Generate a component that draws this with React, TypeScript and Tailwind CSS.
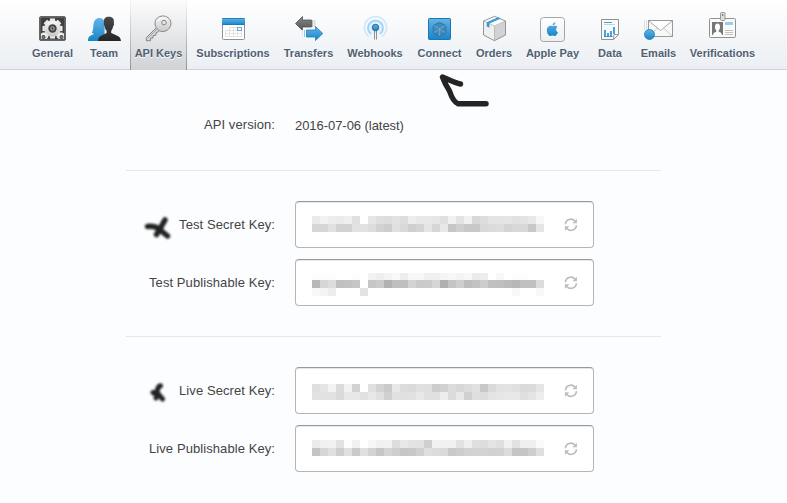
import type { ReactNode } from "react";

type NavItem = { label: string; width: string; box: string; art: ReactNode; active?: boolean };

const gearTeeth = [0, 45, 90, 135, 180, 225, 270, 315];

function Gear({ x, y, r }: { x: number; y: number; r: number }) {
  return (
    <g transform={`translate(${x} ${y})`} fill="url(#silver)">
      {gearTeeth.map((a) => (
        <path key={a} transform={`rotate(${a})`} d={`M${-r * 0.3} ${-r * 0.6}L${-r * 0.24} ${-r}H${r * 0.24}L${r * 0.3} ${-r * 0.6}z`} />
      ))}
      <circle r={r * 0.8} />
      <circle r={r * 0.42} fill="#444" />
      <circle r={r * 0.22} fill="#999" />
      <circle r={r * 0.09} fill="#333" />
    </g>
  );
}

const items: NavItem[] = [
  {
    label: "General",
    width: "w-[51px]",
    box: "27 10 51 32",
    art: (
      <g>
        <rect x="39.5" y="16.5" width="26" height="24" rx="1.5" fill="#3f3f3f" stroke="#666" />
        <rect x="40.5" y="17.5" width="24" height="22" fill="none" stroke="#8a8a8a" strokeWidth=".4" />
        <svg x="41" y="18" width="23" height="21" viewBox="41 18 23 21">
          <Gear x={52.5} y={28.5} r={10} />
          <Gear x={43.5} y={37} r={4.6} />
          <Gear x={61.5} y={37} r={4.6} />
        </svg>
      </g>
    ),
  },
  {
    label: "Team",
    width: "w-[44px]",
    box: "82 10 44 32",
    art: (
      <g>
        <path d="M88 41c0-4 1.600-5.200 4-6l2.200-1.600c-1.200 0-2-.2-2.400-.6 1.800-2.800 1.200-6 1.800-9.400.6-3.600 3-5.600 6-5.400 3.500.2 5 2.500 5 6v17z" fill="url(#blue)" />
        <path d="M98 41c.2-3.400 1.800-5 4.600-6l4-2v-2.200c-1.400-1.400-1.700-3-2-4.800-.8-.2-1.200-2.300-.6-3-.6-4.300 1.300-6.200 5-6.200s5.400 2.200 4.800 6.200c.6.7.2 2.800-.6 3-.3 1.800-.8 3.400-2 4.800V33l4.500 2c3 1 5 2.600 5.300 6z" fill="url(#dark)" />
      </g>
    ),
  },
  {
    label: "API Keys",
    width: "w-[57px]",
    box: "131 10 55 32",
    active: true,
    art: (
      <g>
        <path d="M155.800 28.200 146.300 37.700v3h4.200v-2.400l2.400-.2.300-2.500 2.500-.3.500-2.500 3-1.500" fill="#d5d5d5" stroke="#858585" strokeLinejoin="round" />
        <path d="M155.500 20.500c1.800-3.700 6-5.200 9.800-4.200 4 1.200 6.400 5 5.400 9-1.200 4-5 6.800-9 6.200-4.800-.8-8-6.500-6.200-11z" fill="url(#silver)" stroke="#858585" />
        <path d="m157 29-9 9.200" stroke="#999" strokeWidth=".8" />
        <circle cx="164" cy="22.600" r="2.300" fill="#e5e5e5" stroke="#858585" />
        <path d="M157.500 21.500c1.500-3 4.500-4 7.500-3.400" fill="none" stroke="#fff" />
      </g>
    ),
  },
  {
    label: "Subscriptions",
    width: "w-[84px]",
    box: "191 10 84 32",
    art: (
      <g>
        <rect x="222.500" y="18.500" width="22" height="21" rx="1" fill="#fff" stroke="#919191" />
        <rect x="222" y="18" width="23" height="7" rx="1" fill="url(#blue)" />
        <path d="M222.500 24.500h22M222.500 18.500h22" stroke="#1c75b2" strokeWidth=".8" />
        <path d="M229.500 27.500h12v3h-16v3h16v3h-16v-6m4-3v9m4-9v9m4-9v9m4-9v9" fill="none" stroke="#e2e2e2" />
        <rect x="237.500" y="27.500" width="4" height="3" fill="#eef8ff" stroke="#6eafda" />
      </g>
    ),
  },
  {
    label: "Transfers",
    width: "w-[59px]",
    box: "279 10 59 32",
    art: (
      <g>
        <path d="M295.500 23.500 302.500 16.500v3.500h9v7h-9v3.500z" fill="url(#gray)" stroke="#555" strokeWidth=".8" />
        <path d="M312.500 20v7" stroke="#bbb" />
        <path d="M314.500 20v7" stroke="#ddd" strokeWidth="2" />
        <path d="M322.800 33.500 315.500 26.500v3.500h-9v7h9v3.500z" fill="url(#blue)" stroke="#287fb9" strokeWidth=".8" />
        <path d="M304.500 30v7" stroke="#8fcaee" />
        <path d="M302.500 30v7" stroke="#d4ebf8" />
      </g>
    ),
  },
  {
    label: "Webhooks",
    width: "w-[66px]",
    box: "342 10 66 32",
    art: (
      <g fill="none">
        <path d="M369 36.500a11 11 0 1 1 13 0" stroke="#cfe8fb" strokeWidth="1.800" />
        <path d="M371 34a7.500 7.500 0 1 1 9 0" fill="#e2f2fe" stroke="#a3d5fb" strokeWidth="2" />
        <path d="M374.500 31v8.500M376.500 31v8.500" stroke="#777" strokeWidth=".8" />
        <circle cx="375.500" cy="27.500" r="3.200" fill="url(#blue)" stroke="#27638d" />
      </g>
    ),
  },
  {
    label: "Connect",
    width: "w-[55px]",
    box: "412 10 55 32",
    art: (
      <g>
        <rect x="428.500" y="18.500" width="22" height="21" rx=".8" fill="url(#blue)" stroke="#1877b4" />
        <path d="m439.500 22.500 6.300 3v7.500l-6.300 3.500-6.300-3.500v-7.500z" fill="#4089b9" stroke="#2f74a2" />
        <path d="m433.500 25.500 6 3 6-3m-6 3v7.500M434 32.500l5.500-3.500 5.500 3.500" fill="none" stroke="#76b2d8" strokeWidth=".7" />
      </g>
    ),
  },
  {
    label: "Orders",
    width: "w-[46px]",
    box: "471 10 46 32",
    art: (
      <g strokeLinejoin="round">
        <path d="M483.500 21v14l11 5.700V26z" fill="#f0f0f0" />
        <path d="M505.500 21v14l-11 5.700V26z" fill="#d2d2d4" />
        <path d="m483.500 21 11-4.700 11 4.700-11 5z" fill="#fafafa" />
        <path d="M494.500 26v14.500M483.500 21l11 5 11-5" fill="none" stroke="#b5b5b5" strokeWidth=".8" />
        <path d="m483.500 21 11-4.700 11 4.700v14l-11 5.700-11-5.700z" fill="none" stroke="#8b8b8b" strokeWidth=".9" />
        <path d="m486.700 22.200 11.300-4.900 3 1.300-11.500 5v4.200l-2.800-1.300z" fill="#3c9bd6" />
      </g>
    ),
  },
  {
    label: "Apple Pay",
    width: "w-[63px]",
    box: "521 10 63 32",
    art: (
      <g>
        <rect x="540.500" y="17.500" width="24" height="24" rx="3" fill="url(#paper)" stroke="#a5a5a5" />
        <path d="M552.700 26.200c1.500-.8 3.500-.8 4.800.8-2 1.500-1.800 4.300.5 5.200-.6 1.800-1.900 3.800-3.200 3.800-.8 0-1.400-.5-2.200-.5-.9 0-1.600.5-2.300.5-1.800 0-3.500-3.200-3.500-5.700 0-3.500 2.800-5.300 5.900-4.100zM552.600 25.500c-.1-1.800 1-3.200 2.800-3.300.1 1.700-1 3.100-2.800 3.300z" fill="url(#blue)" />
      </g>
    ),
  },
  {
    label: "Data",
    width: "w-[44px]",
    box: "588 10 44 32",
    art: (
      <g>
        <path d="M601.500 19.500h17v15l-5 5h-12z" fill="#fafafa" stroke="#919191" />
        <path d="m613.500 39.500.5-5 4.500.2z" fill="#fff" stroke="#919191" strokeLinejoin="round" />
        <path d="M604 22.500h8" stroke="#3d9dd8" />
        <path d="M604 24.500h11" stroke="#addaf3" />
        <path d="M605 30v7M608 33v4M611 31v6M614 27v7" stroke="#349ad6" strokeWidth="1.800" />
        <path d="M604 36.500h8.500" stroke="#2589c6" strokeWidth=".8" />
      </g>
    ),
  },
  {
    label: "Emails",
    width: "w-[45px]",
    box: "636 10 45 32",
    art: (
      <g>
        <path d="M644.500 20v11M646.500 20v11" stroke="#ddd" />
        <rect x="648.500" y="20.500" width="24" height="16" fill="#f8f8f8" stroke="#999" />
        <path d="m649 36 8.500-8M672 36l-8.500-8" stroke="#ccc" />
        <path d="m649 21 11.500 9.500L672 21" fill="#fff" stroke="#aaa" />
        <circle cx="649.500" cy="34.500" r="5" fill="url(#blue)" stroke="#2787c1" strokeWidth=".9" />
      </g>
    ),
  },
  {
    label: "Verifications",
    width: "w-[75px]",
    box: "685 10 75 32",
    art: (
      <g>
        <rect x="709.500" y="18.500" width="26" height="19" rx="1" fill="#fafafa" stroke="#919191" />
        <rect x="712" y="22" width="11" height="13" fill="#777" />
        <path d="M713 35c.2-2 1.500-2.500 3.300-3.200v-1.300c-1-1-1.200-2-1.300-3-.2-2.500.8-4 2.500-4s2.700 1.500 2.500 4c-.1 1-.3 2-1.300 3v1.300c1.800.7 3.100 1.200 3.300 3.200z" fill="#fff" />
        <path d="M725 23.500h8" stroke="#94cff1" strokeWidth="3" />
        <path d="M725 30.500h8M725 32.500h8M725 34.500h8" stroke="#bbb" strokeWidth=".9" />
        <rect x="720.500" y="12.500" width="4.500" height="8" rx="1" fill="#ddd" stroke="#999" />
        <path d="M722.700 14v2" stroke="#666" />
      </g>
    ),
  },
];

/* Grey level of each 8px mosaic block, two hex digits per block. */
const testSecret = [
  "eaf2edebefe0ffe6dfdde2ddede8e8e6e0f0e3f0d8dde4e4e5e1e3e7f7",
  "d6d6e1d2d2e2e2ddd2cde0d9cfd4e5d6e8c6cfc8c8d9dbddd4d8d8c8e5",
];
const testPublishable = [
  "fcfcfcfffffcfff2eff4f9edf7f7f0f0f5f7f3f8ebedfff8fffcfcffff",
  "b8d5ddc0c2c6ffc6cbb2bfbfd3cacbd5b0c4cebdc2ccc0bfbbb7c0c0dc",
  "f8f4edffffffe3fffffffffffffffffffffffffffffffffffff8fffff8",
];
const liveSecret = [
  "dfe5f3dbf2d2ffe0d3cae8dcdae0dfcdd1dcd7dce1c8dae2e3e0dadbe5",
  "e2e2e2dae7e7e1e8e0d0e1e0e1e7e0e0eddbe7d0dfdde4e6e7e7dee4ed",
];
const livePublishable = [
  "ebf1f2e2fdf0fff7f0f2dde7e3e2cff2f0f0e2efdedde4dff0e2efeff9",
  "c4d6e0cee0cae0d3c6d4cec6c8d0dfdcdac9cdd2d3d3d1d2dcc5c5cedf",
];

function Mosaic({ rows, shortTop }: { rows: string[]; shortTop?: boolean }) {
  return (
    <div className="grid w-[232px]">
      {rows.map((row, i) => (
        <div key={i} className={`flex ${shortTop && i === 0 ? "h-[7px]" : "h-2"}`}>
          {(row.match(/../g) ?? []).map((c, j) => (
            <span key={j} className="w-2 shrink-0" style={{ backgroundColor: `#${c}${c}${c}` }} />
          ))}
        </div>
      ))}
    </div>
  );
}

function Refresh() {
  return (
    <svg className="mt-4 ml-5" width="14" height="14" viewBox="0 0 14 14" fill="none" stroke="#bdbdbd" strokeWidth="1.700">
      <path d="M1.400 6.300A5.500 5.500 0 0 1 11 3M12.400 7.200A5.500 5.500 0 0 1 2.800 10.500" />
      <path d="M12.900.8v4.500H8.400zM.9 12.700V8.200h4.500z" fill="#bdbdbd" stroke="none" />
    </svg>
  );
}

function KeyRow({ label, rows, pad, mark, shortTop }: { label: string; rows: string[]; pad: string; mark?: ReactNode; shortTop?: boolean }) {
  return (
    <div className="flex h-[47px]">
      <div className="flex w-[275px] justify-end text-[13px] leading-[47px] tracking-[0.08px]">
        {mark}
        {label}
      </div>
      <div className="ml-5 flex w-[299px] items-start rounded-[4px] border border-[#b5b5b5] border-t-[#999] bg-white pl-4 shadow-[inset_0_1px_0_#e7e7e7]">
        <div className={pad}>
          <Mosaic rows={rows} shortTop={shortTop} />
        </div>
        <Refresh />
      </div>
    </div>
  );
}

export default function App() {
  return (
    <div className="h-[503px] w-[787px] overflow-hidden bg-[#fcfdff] font-['Liberation_Sans',Arial,sans-serif] text-[#444]">
      <svg className="absolute" width="0" height="0">
        <defs>
          <linearGradient id="blue" x2="0" y2="1"><stop stopColor="#62b5e8" /><stop offset="1" stopColor="#1785c7" /></linearGradient>
          <linearGradient id="dark" x2="0" y2="1"><stop stopColor="#484848" /><stop offset="1" stopColor="#262626" /></linearGradient>
          <linearGradient id="gray" x2="0" y2="1"><stop stopColor="#888" /><stop offset="1" stopColor="#555" /></linearGradient>
          <linearGradient id="silver" x2="0" y2="1"><stop stopColor="#f7f7f7" /><stop offset="1" stopColor="#c8c8c8" /></linearGradient>
          <linearGradient id="paper" x2="0" y2="1"><stop stopColor="#fff" /><stop offset="1" stopColor="#eee" /></linearGradient>
        </defs>
      </svg>
      <nav className="flex h-[70px] gap-1 border-b border-[#cdd3d9] bg-linear-to-b from-white to-[#ebeff3] pl-[27px]">
        {items.map((item) => (
          <div key={item.label} className={`h-[70px] shrink-0 ${item.width} ${item.active ? "bg-linear-to-b from-[#f6f7f8] to-[#909397] px-px" : ""}`}>
            <div className={`flex h-full flex-col items-center pt-[10px] ${item.active ? "bg-linear-to-b from-[#fcfcfd] to-[#d0d3d6]" : ""}`}>
              <svg className="block h-8 w-full shrink-0" viewBox={item.box}>{item.art}</svg>
              <span className="mt-1 text-[11px] leading-[14px] font-bold whitespace-nowrap text-[#4f6073] [text-shadow:0_1px_0_#fff]">{item.label}</span>
            </div>
          </div>
        ))}
      </nav>

      <main className="relative">
        <svg className="absolute top-0 left-[430px] blur-[0.6px]" width="70" height="44" viewBox="430 70 70 44" fill="none" stroke="#242424" strokeLinecap="round" strokeLinejoin="round">
          <path d="M460.500 84c-6-1-12-4.500-18-7l3 7 4 7c2 6 4 11 8.500 12.700h28" strokeWidth="5.500" />
        </svg>
        <div className="flex h-[100px] pt-[45px] text-[13px] leading-5">
          <span className="w-[275px] text-right tracking-[0.08px]">API version:</span>
          <span className="ml-5 pt-px tracking-[-0.05px]">2016-07-06 (latest)</span>
        </div>
        <hr className="ml-[126px] w-[535px] border-[#e6e7e8]" />
        <div className="flex flex-col gap-[11px] pt-[30px]">
          <KeyRow
            label="Test Secret Key:"
            rows={testSecret}
            pad="pt-[14px]"
            mark={
              <svg className="mt-[11px] mr-1 blur-[0.8px]" width="34" height="30" viewBox="141 212 34 30" fill="none" stroke="#222" strokeLinecap="round" strokeLinejoin="round" strokeWidth="5.500">
                <path d="M147.500 226.500c5-.5 8 0 11.500 2.500l8.500 7M165 220c-2.500 3.500-4.500 9.500-8.500 14.500" />
              </svg>
            }
          />
          <KeyRow label="Test Publishable Key:" rows={testPublishable} pad="pt-[13px]" shortTop />
        </div>
        <hr className="mt-[30px] ml-[126px] w-[535px] border-[#e6e7e8]" />
        <div className="flex flex-col gap-[11px] pt-[30px]">
          <KeyRow
            label="Live Secret Key:"
            rows={liveSecret}
            pad="pt-[16px]"
            mark={
              <svg className="mt-[13px] mr-[5px] blur-[0.8px]" width="28" height="26" viewBox="146 380 28 26" fill="none" stroke="#222" strokeLinecap="round" strokeLinejoin="round" strokeWidth="5">
                <path d="M160.500 385.800c-3 .7-3 4-3.500 6.700l-4 0 3.500 2.500-.5 3M157.500 393l5 6" />
              </svg>
            }
          />
          <KeyRow label="Live Publishable Key:" rows={livePublishable} pad="pt-[14px]" />
        </div>
      </main>
    </div>
  );
}
